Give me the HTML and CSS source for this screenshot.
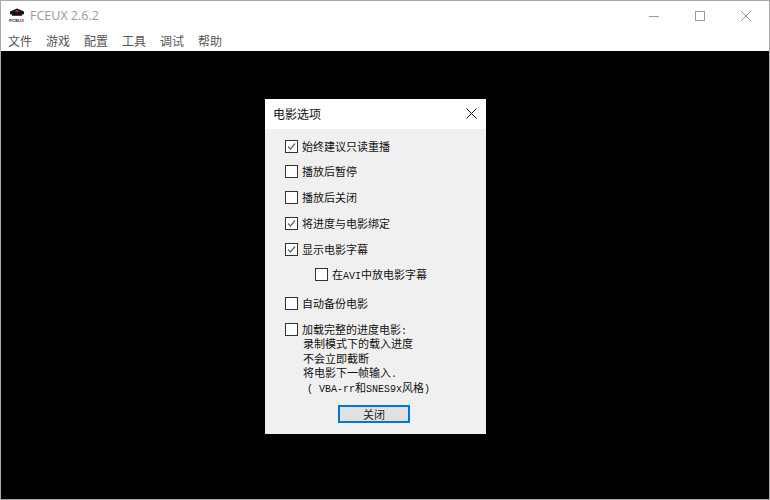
FILE: index.html
```html
<!DOCTYPE html>
<html lang="zh-CN">
<head>
<meta charset="utf-8">
<title>FCEUX 2.6.2</title>
<link rel="stylesheet" href="styles.css">
</head>
<body>
<div class="window">
  <header class="titlebar">
    <svg class="app-icon" width="16" height="16" viewBox="0 0 16 16" aria-hidden="true">
      <path d="M1 3.5 L8 0.5 L15 3.5 L15 6 Q8 9 1 6 Z" fill="#111"/>
      <path d="M5 3.2 L8 2 L11 3.2 L8 4.6 Z" fill="#9a2a2a"/>
      <rect x="3" y="7" width="10" height="1" fill="#444"/>
      <text x="0.3" y="14" class="icon-text">FCE<tspan class="icon-red">UX</tspan></text>
    </svg>
    <span class="app-title">FCEUX 2.6.2</span>
    <div class="win-controls">
      <svg width="12" height="12" viewBox="0 0 12 12" aria-hidden="true"><path d="M1 6.5H11" stroke="#999" fill="none"/></svg>
      <svg width="12" height="12" viewBox="0 0 12 12" aria-hidden="true"><rect x="1.5" y="1.5" width="9" height="9" stroke="#999" fill="none"/></svg>
      <svg width="12" height="12" viewBox="0 0 12 12" aria-hidden="true"><path d="M1 1L11 11M11 1L1 11" stroke="#999" fill="none"/></svg>
    </div>
  </header>
  <nav class="menubar">
    <span>文件</span><span>游戏</span><span>配置</span><span>工具</span><span>调试</span><span>帮助</span>
  </nav>
  <main class="screen">
    <section class="dialog">
      <div class="dialog-title">
        <span>电影选项</span>
        <svg width="11" height="11" viewBox="0 0 11 11" aria-hidden="true"><path d="M0.5 0.5L10.5 10.5M10.5 0.5L0.5 10.5" stroke="#111" fill="none"/></svg>
      </div>
      <div class="dialog-body">
        <div class="option first-row"><span class="box"><svg width="11" height="11" viewBox="0 0 11 11"><path d="M2 5.5L4.5 8L9 2.5" stroke="#666" stroke-width="1.3" fill="none"/></svg></span><span class="label">始终建议只读重播</span></div>
        <div class="option"><span class="box"></span><span class="label">播放后暂停</span></div>
        <div class="option"><span class="box"></span><span class="label">播放后关闭</span></div>
        <div class="option"><span class="box"><svg width="11" height="11" viewBox="0 0 11 11"><path d="M2 5.5L4.5 8L9 2.5" stroke="#666" stroke-width="1.3" fill="none"/></svg></span><span class="label">将进度与电影绑定</span></div>
        <div class="option tight"><span class="box"><svg width="11" height="11" viewBox="0 0 11 11"><path d="M2 5.5L4.5 8L9 2.5" stroke="#666" stroke-width="1.3" fill="none"/></svg></span><span class="label">显示电影字幕</span></div>
        <div class="option nested"><span class="box"></span><span class="label">在<span class="latin">AVI</span>中放电影字幕</span></div>
        <div class="option"><span class="box"></span><span class="label">自动备份电影</span></div>
        <div class="option multi">
          <span class="box"></span>
          <div class="multi-text">
            <div class="first">加载完整的进度电影<span class="latin">:</span></div>
            <div>录制模式下的载入进度</div>
            <div>不会立即截断</div>
            <div>将电影下一帧输入<span class="latin">.</span></div>
            <div class="note"><span class="latin">( VBA-rr</span>和<span class="latin">SNES9x</span>风格<span class="latin">)</span></div>
          </div>
        </div>
        <button class="close-btn" type="button">关闭</button>
      </div>
    </section>
  </main>
</div>
</body>
</html>
```
FILE: styles.css
```css
* { box-sizing: border-box; }
html, body { margin: 0; padding: 0; width: 770px; height: 500px; overflow: hidden; }
body { font-family: "Noto Sans CJK SC", "Noto Sans", sans-serif; background: #000; }

.window {
  width: 770px;
  height: 500px;
  display: flex;
  flex-direction: column;
  border: 1px solid #aaa;
  background: #fff;
}

.titlebar {
  height: 29px;
  flex: none;
  display: flex;
  align-items: center;
  padding-left: 8px;
  background: #fff;
}
.app-icon { flex: none; margin-top: 1px; }
.icon-text { font: 700 4.4px "Liberation Sans", sans-serif; fill: #111; }
.icon-red { fill: #d11; }
.app-title {
  margin-left: 5px;
  font: 12.5px "Open Sans", "Noto Sans", sans-serif;
  color: #999;
}
.win-controls {
  margin-left: auto;
  margin-right: 17px;
  display: flex;
  gap: 34px;
  align-items: center;
}

.menubar {
  height: 21px;
  flex: none;
  display: flex;
  gap: 14px;
  padding: 0 0 0 7px;
  align-items: center;
  font-size: 12px;
  line-height: 16px;
  color: #555;
}

.screen {
  flex: 1;
  position: relative;
  background: #000;
}

.dialog {
  position: absolute;
  left: 264px;
  top: 48px;
  width: 221px;
  height: 335px;
  display: flex;
  flex-direction: column;
  background: #f0f0f0;
}
.dialog-title {
  height: 30px;
  flex: none;
  display: flex;
  align-items: center;
  justify-content: space-between;
  padding: 0 9px 1px 8px;
  background: #fff;
  font-size: 12px;
  color: #111;
}
.dialog-body {
  flex: 1;
  display: flex;
  flex-direction: column;
  padding: 11px 0 0 20px;
  font-family: "Noto Sans CJK SC", sans-serif;
  font-size: 11px;
  color: #111;
}

.latin { font-family: "Liberation Mono", monospace; font-size: 10px; line-height: 0; }

.option {
  height: 13px;
  display: flex;
  align-items: center;
  gap: 4px;
  line-height: 13px;
  margin-bottom: 13px;
}
.option.first-row { margin-bottom: 12px; }
.option.tight { margin-bottom: 12px; }
.option.nested { margin-left: 30px; margin-bottom: 16px; }
.option.multi { height: auto; align-items: flex-start; margin-bottom: 0; }
.label { white-space: pre; }

.box {
  width: 13px;
  height: 13px;
  flex: none;
  display: flex;
  align-items: center;
  justify-content: center;
  border: 1px solid #333;
  background: #fff;
}

.multi-text { line-height: 14.4px; margin-top: -1px; }
.multi-text > div { padding-left: 1px; white-space: pre; }
.multi-text > .first { padding-left: 0; }
.multi-text > .note { padding-left: 5px; }

.close-btn {
  align-self: flex-start;
  margin: 11px 0 0 53px;
  width: 72px;
  height: 18px;
  padding: 0;
  border: 2px solid #0078d7;
  background: #e1e1e1;
  font-family: "Noto Sans CJK SC", sans-serif;
  font-size: 11px;
  line-height: 13px;
  color: #222;
}
```
